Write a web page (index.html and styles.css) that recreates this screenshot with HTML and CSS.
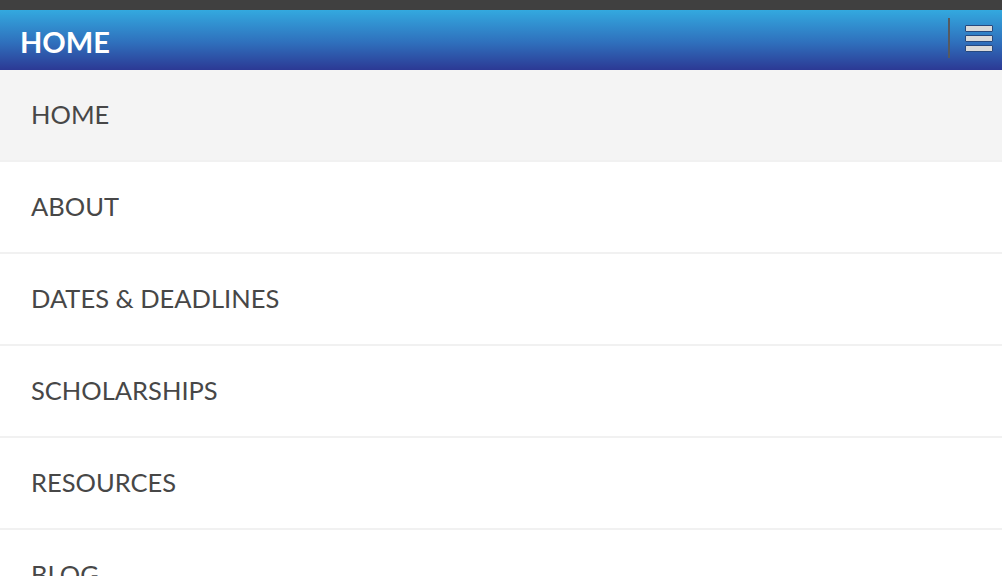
FILE: index.html
```html
<!DOCTYPE html>
<html>
<head>
<meta charset="utf-8">
<link rel="stylesheet" href="styles.css">
</head>
<body>
<div class="topbar"></div>
<header class="header">
  <h1 class="title">HOME</h1>
  <div class="tools">
    <span class="divider"></span>
    <button class="menu-btn" aria-label="Menu">
      <span class="bar"></span><span class="bar"></span><span class="bar"></span>
    </button>
  </div>
</header>
<nav class="menu">
  <a class="item active">HOME</a>
  <a class="item">ABOUT</a>
  <a class="item">DATES &amp; DEADLINES</a>
  <a class="item">SCHOLARSHIPS</a>
  <a class="item">RESOURCES</a>
  <a class="item">BLOG</a>
</nav>
</body>
</html>
```
FILE: styles.css
```css
html, body {
  margin: 0;
  padding: 0;
  background: #ffffff;
  font-family: Lato, "Open Sans", sans-serif;
  overflow: hidden;
  height: 576px;
}
.topbar {
  height: 10px;
  background: #404040;
}
.header {
  height: 60px;
  background: linear-gradient(to bottom, #33a9df 0%, #2f6fbc 55%, #2c3994 100%);
  display: flex;
  align-items: center;
  justify-content: space-between;
  padding-left: 20px;
}
.title {
  margin: 0;
  color: #ffffff;
  font-size: 29px;
  font-weight: 700;
  line-height: 1;
  padding-top: 2px;
}
.tools {
  display: flex;
  align-items: center;
  height: 100%;
}
.divider {
  width: 2px;
  height: 40px;
  background: #555a60;
  margin-right: 15px;
  margin-top: -4px;
}
.menu-btn {
  border: 0;
  background: none;
  padding: 0;
  margin-right: 9px;
  display: flex;
  flex-direction: column;
  gap: 3px;
  margin-top: -3px;
}
.bar {
  display: block;
  width: 26px;
  height: 5px;
  background: #d9d9d9;
  border: 1px solid #27497f;
  border-radius: 1px;
}
.menu {
  display: flex;
  flex-direction: column;
}
.item {
  display: flex;
  align-items: center;
  box-sizing: border-box;
  height: 92px;
  padding-left: 31px;
  padding-bottom: 2px;
  border-bottom: 2px solid #f1f1f1;
  color: #474747;
  font-size: 25.5px;
  flex-shrink: 0;
}
.item.active {
  background: #f4f4f4;
}
```
